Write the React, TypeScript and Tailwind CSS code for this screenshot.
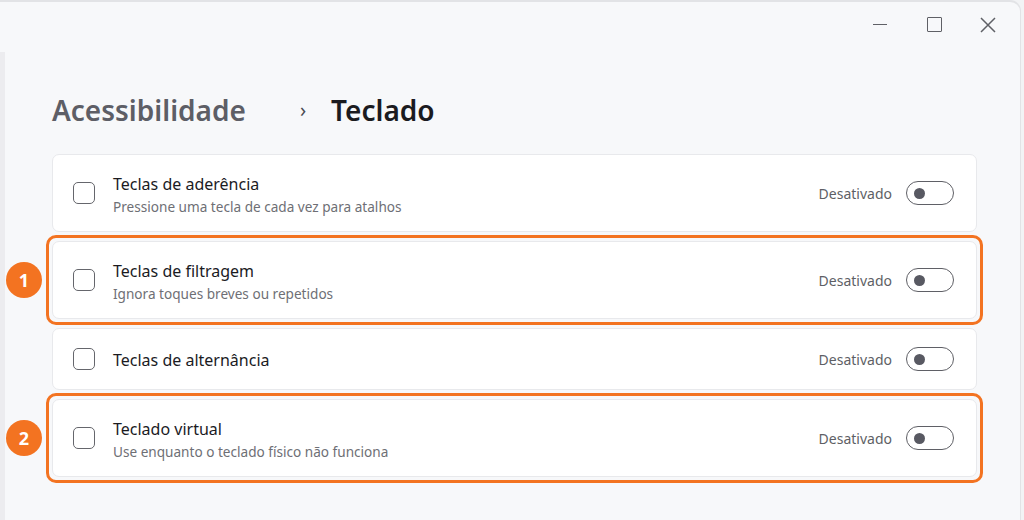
import { ReactNode } from "react";

type Setting = {
  title: string;
  desc?: string;
  badge?: string;
};

const settings: Setting[] = [
  { title: "Teclas de aderência", desc: "Pressione uma tecla de cada vez para atalhos" },
  { title: "Teclas de filtragem", desc: "Ignora toques breves ou repetidos", badge: "1" },
  { title: "Teclas de alternância" },
  { title: "Teclado virtual", desc: "Use enquanto o teclado físico não funciona", badge: "2" },
];

function Toggle() {
  return (
    <div className="w-[48px] h-[24px] rounded-full border-[1.5px] border-[#5f6066] flex items-center pl-[7px] shrink-0">
      <div className="w-[11px] h-[11px] rounded-full bg-[#585962]" />
    </div>
  );
}

function Card({ item }: { item: Setting }) {
  return (
    <div
      className={`bg-white rounded-[7px] border border-[#e8e9ec] flex items-center pl-[20px] pr-[22px] ${
        item.desc ? "h-[78px]" : "h-[62px]"
      }`}
    >
      <div className="w-[22px] h-[22px] rounded-[5px] border-[1.5px] border-[#65666c] shrink-0" />
      <div className={`ml-[18px] flex-1 flex flex-col ${item.desc ? "pt-[4px]" : "pt-[1px]"}`}>
        <span className="text-[16px] leading-[22px] text-[#1b1b1f]">{item.title}</span>
        {item.desc && (
          <span className="text-[13.6px] leading-[20px] text-[#6e6f75] mt-[2px]">{item.desc}</span>
        )}
      </div>
      <span className="text-[14px] text-[#5e5f65] mr-[14px]">Desativado</span>
      <Toggle />
    </div>
  );
}

function Highlight({ badge, children }: { badge: string; children: ReactNode }) {
  return (
    <div className="relative -mx-[6px] border-[3px] border-[#f37321] rounded-[10px] p-[3px]">
      <div className="absolute -left-[43px] top-1/2 -translate-y-1/2 w-[36px] h-[36px] rounded-full bg-[#f37321] text-white font-bold text-[18px] flex items-center justify-center">
        {badge}
      </div>
      {children}
    </div>
  );
}

export default function App() {
  return (
    <div className="w-[1024px] h-[520px] bg-[#f2f3f5] overflow-hidden font-['Noto_Sans',sans-serif]">
      <div className="w-[1021px] h-[540px] bg-[#f7f8fa] border-t-[2px] border-r border-[#e2e3e6] rounded-tr-[11px] flex">
        {/* nav pane edge */}
        <div className="w-[5px] mt-[50px] bg-[#ececef] shrink-0" />

        <div className="flex-1 flex flex-col">
          {/* title bar */}
          <div className="h-[45px] flex items-center justify-end pr-[5px]">
            <div className="w-[54px] flex justify-center">
              <div className="w-[14px] h-[1.5px] bg-[#5f6066]" />
            </div>
            <div className="w-[54px] flex justify-center">
              <div className="w-[15px] h-[15px] border-[1.5px] border-[#5f6066] rounded-[1px]" />
            </div>
            <div className="w-[54px] flex justify-center">
              <svg width="16" height="16" viewBox="0 0 16 16" fill="none">
                <path d="M1 1L15 15M15 1L1 15" stroke="#5f6066" strokeWidth="1.5" />
              </svg>
            </div>
          </div>

          {/* breadcrumb */}
          <div className="h-[107px] pl-[47px] pt-[43px] flex items-start">
            <span className="text-[28px] leading-[40px] font-semibold text-[#5d5e66]">Acessibilidade</span>
            <span className="ml-[54px] mr-[25px] text-[20px] leading-[40px] text-[#4a4b52]">›</span>
            <span className="text-[28px] leading-[40px] font-semibold text-[#1b1b1f]">Teclado</span>
          </div>

          {/* cards */}
          <div className="pl-[47px] pr-[43px] flex flex-col gap-[3px]">
            {settings.map((item) =>
              item.badge ? (
                <Highlight key={item.title} badge={item.badge}>
                  <Card item={item} />
                </Highlight>
              ) : (
                <Card key={item.title} item={item} />
              )
            )}
          </div>
        </div>
      </div>
    </div>
  );
}
